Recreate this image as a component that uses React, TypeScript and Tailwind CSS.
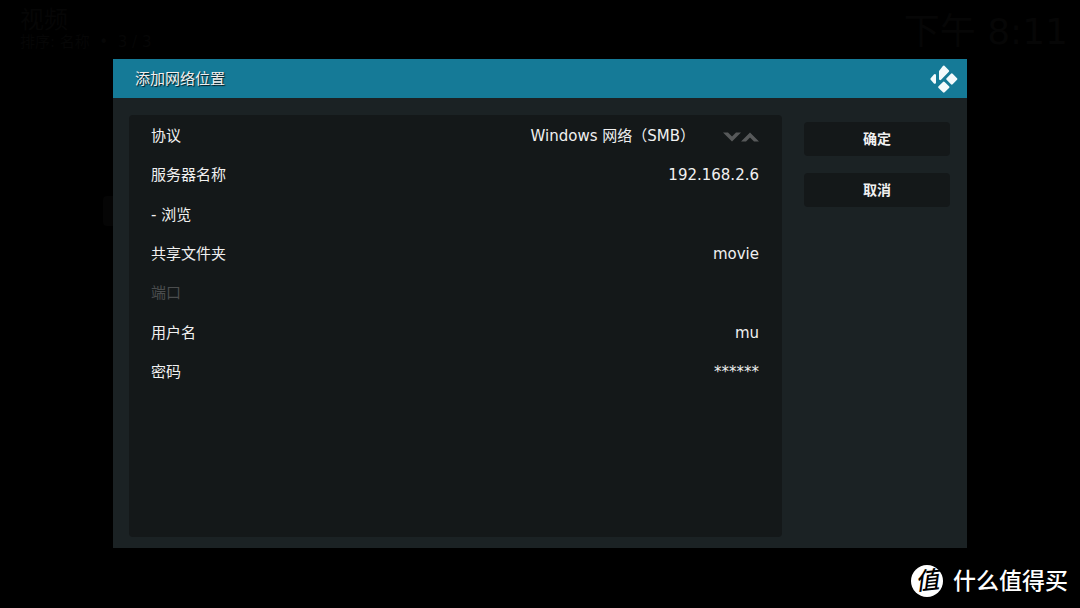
import { useState } from "react";

const PROTOCOLS = ["Windows 网络（SMB）", "网络文件系统（NFS）", "FTP 服务器"];

interface Field {
  id: string;
  label: string;
  value?: string;
  disabled?: boolean;
}

const SERVER_FIELD: Field = { id: "server", label: "服务器名称", value: "192.168.2.6" };

const FIELDS: Field[] = [
  { id: "share", label: "共享文件夹", value: "movie" },
  { id: "port", label: "端口", disabled: true },
  { id: "user", label: "用户名", value: "mu" },
  { id: "password", label: "密码", value: "******" },
];

function KodiLogo() {
  return (
    <svg viewBox="0 0 28 28" className="size-7" fill="#f4fafc" stroke="#f4fafc" strokeWidth="2.4" strokeLinejoin="round" aria-hidden="true">
      <path d="M10.2 6.4 13.8 1.8 18 6 10.2 14Z" />
      <path d="M4.8 10.2 1.6 14 4.8 17.6Z" />
      <path d="M21.8 9.6 26.2 14 21.8 18.4 17.4 14Z" />
      <path d="M13.8 17.8 18.2 22.1 13.8 26.4 9.4 22.1Z" />
    </svg>
  );
}

function SettingRow({ id, label, value = "", disabled }: Field) {
  return (
    <div className="flex items-center justify-between">
      <label htmlFor={id} className={disabled ? "text-[#4b4d4e]" : ""}>
        {label}
      </label>
      <input
        id={id}
        type="text"
        defaultValue={value}
        disabled={disabled}
        autoComplete="off"
        className="min-w-0 flex-1 bg-transparent text-right outline-none"
      />
    </div>
  );
}

// Protocol is picked with the down / up arrows
function ProtocolRow() {
  const [index, setIndex] = useState(0);
  const step = (by: number) => setIndex((index + by + PROTOCOLS.length) % PROTOCOLS.length);

  return (
    <div className="flex items-center">
      <label htmlFor="protocol">协议</label>
      <input
        id="protocol"
        type="text"
        readOnly
        value={PROTOCOLS[index]}
        className="mr-7 min-w-0 flex-1 bg-transparent text-right outline-none"
      />
      <button type="button" aria-label="下一个" onClick={() => step(1)}>
        <svg viewBox="0 0 18 12" className="h-3 w-[18px]" fill="#57595a">
          <path d="M0 2.5H5L9 6.5 13 2.5H18L9 11.5Z" />
        </svg>
      </button>
      <button type="button" aria-label="上一个" onClick={() => step(-1)}>
        <svg viewBox="0 0 18 12" className="h-3 w-[18px]" fill="#57595a">
          <path d="M0 11.5H5L9 7.5 13 11.5H18L9 2.5Z" />
        </svg>
      </button>
    </div>
  );
}

// Dimmed video window behind the dialog
function Backdrop() {
  return (
    <div className="absolute inset-x-0 top-0 flex justify-between pl-5 pr-3 text-[#060606]">
      <div className="pt-2">
        <div className="text-[24px] leading-6">视频</div>
        <div className="text-[15px] leading-5">排序: 名称 &nbsp;•&nbsp; 3 / 3</div>
      </div>
      <div className="pt-3 text-[36px] leading-10">下午 8:11</div>
      <div className="absolute left-[103px] top-[196px] h-[30px] w-4 rounded-sm bg-[#050505]" />
    </div>
  );
}

function Watermark() {
  return (
    <div className="absolute bottom-[11px] right-3 flex items-center gap-[10px] font-medium text-white">
      <span className="flex size-8 items-center justify-center rounded-full bg-white">
        <span className="-rotate-6 text-[24px] italic leading-8 text-black">值</span>
      </span>
      <span className="text-[23px] leading-8">什么值得买</span>
    </div>
  );
}

export default function App() {
  return (
    <div className="relative flex min-h-screen flex-col bg-black px-[113px] pb-[60px] pt-[59px] font-['DejaVu_Sans','Noto_Sans_CJK_SC',sans-serif] text-[15px] leading-5 text-[#f0f0f0]">
      <Backdrop />

      <section role="dialog" aria-labelledby="title" className="relative flex flex-1 flex-col bg-[#1b2224]">
        <header className="flex h-[39px] items-center justify-between bg-[#157a97] pl-[22px] pr-[9px]">
          <h1 id="title" className="[text-shadow:1px_1px_1px_#000c]">
            添加网络位置
          </h1>
          <KodiLogo />
        </header>

        <div className="flex flex-1 gap-[22px] pb-[11px] pl-4 pr-[17px] pt-[17px]">
          <div className="flex-1 rounded-sm bg-[#141819] pl-[22px] pr-[23px] pt-px">
            <div className="grid h-[276px] grid-rows-7">
              <ProtocolRow />
              <SettingRow {...SERVER_FIELD} />
              <button type="button" className="text-left">
                - 浏览
              </button>
              {FIELDS.map((field) => (
                <SettingRow key={field.id} {...field} />
              ))}
            </div>
          </div>

          <div className="flex w-[146px] flex-col gap-[17px] pt-[7px] text-[14px] font-bold">
            <button type="button" className="h-[34px] rounded-sm bg-[#141819]">
              确定
            </button>
            <button type="button" className="h-[34px] rounded-sm bg-[#141819]">
              取消
            </button>
          </div>
        </div>
      </section>

      <Watermark />
    </div>
  );
}
